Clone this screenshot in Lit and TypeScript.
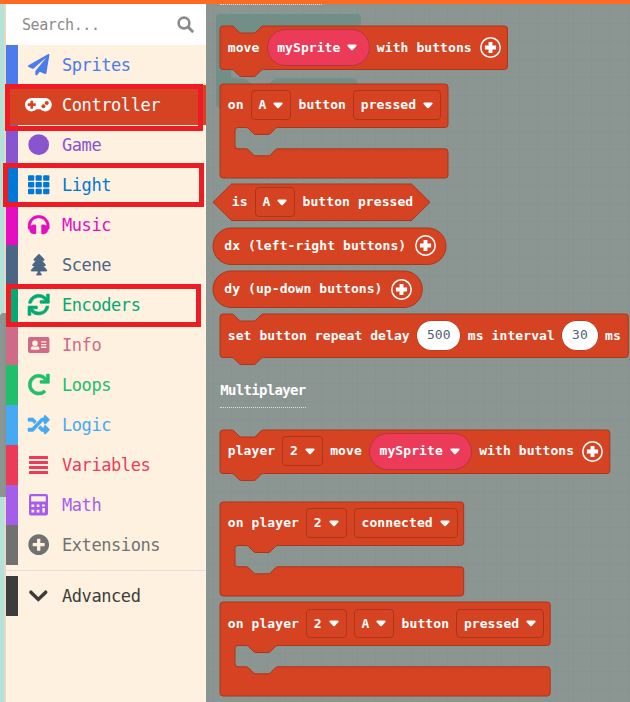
import { LitElement, html, css, svg, TemplateResult } from "lit";
import { customElement, property } from "lit/decorators.js";
import { classMap } from "lit/directives/class-map.js";
import { styleMap } from "lit/directives/style-map.js";

const p = (d: string, stroke = 0) => svg`<path d=${d} stroke="currentColor" stroke-width=${stroke} stroke-linejoin="round"></path>`;

const icons: Record<string, { box: string; w: number; h: number; body: unknown }> = {
  search: { box: "0 0 17 17", w: 17, h: 17, body: svg`<g fill="none" stroke="currentColor"><circle cx="7" cy="7" r="5.4" stroke-width="2.6"></circle><path d="M11 11l4.3 4.3" stroke-width="3" stroke-linecap="round"></path></g>` },
  plane: { box: "0 0 512 512", w: 21.4, h: 21.4, body: p("M476 3.2L12.5 270.6c-18.1 10.4-15.8 35.6 2.2 43.2L121 358.4l287.3-253.2c5.5-4.9 13.3 2.6 8.6 8.3L176 407v80.5c0 23.6 28.5 32.9 42.5 15.8L282 426l124.6 52.2c14.2 6 30.4-2.9 33-18.2l72-432C515 7.8 493.3-6.8 476 3.2z") },
  gamepad: { box: "0 0 640 512", w: 26.8, h: 21.4, body: p("M480 96H160C71.6 96 0 167.6 0 256s71.6 160 160 160c44.8 0 85.2-18.4 114.2-48h91.5c29 29.6 69.5 48 114.2 48 88.4 0 160-71.6 160-160S568.4 96 480 96zM256 276c0 6.6-5.4 12-12 12h-52v52c0 6.6-5.4 12-12 12h-40c-6.6 0-12-5.4-12-12v-52H76c-6.6 0-12-5.4-12-12v-40c0-6.6 5.4-12 12-12h52v-52c0-6.6 5.4-12 12-12h40c6.6 0 12 5.4 12 12v52h52c6.6 0 12 5.4 12 12v40zm184 68c-26.5 0-48-21.5-48-48s21.5-48 48-48 48 21.5 48 48-21.5 48-48 48zm80-80c-26.5 0-48-21.5-48-48s21.5-48 48-48 48 21.5 48 48-21.5 48-48 48z") },
  circle: { box: "0 0 512 512", w: 21.4, h: 21.4, body: svg`<circle cx="256" cy="256" r="248"></circle>` },
  grid: { box: "0 0 512 512", w: 21.4, h: 21.4, body: [0, 181.3, 362.7].map((x) => [32, 192, 352].map((y) => svg`<rect x=${x} y=${y} width="149.3" height="130" rx="24"></rect>`)) },
  headphones: { box: "0 0 512 512", w: 21.4, h: 21.4, body: p("M256 32C114.52 32 0 146.497 0 288v48a32 32 0 0 0 17.689 28.622l14.383 7.191C34.083 431.903 83.421 480 144 480h24c13.255 0 24-10.745 24-24V280c0-13.255-10.745-24-24-24h-24c-31.342 0-59.671 12.879-80 33.627V288c0-105.869 86.131-192 192-192s192 86.131 192 192v1.627C427.671 268.879 399.342 256 368 256h-24c-13.255 0-24 10.745-24 24v176c0 13.255 10.745 24 24 24h24c60.579 0 109.917-48.098 111.928-108.187l14.382-7.191A32 32 0 0 0 512 336v-48c0-141.479-114.496-256-256-256z", 8) },
  tree: { box: "0 0 384 512", w: 16, h: 21.4, body: p("M378.31 378.49L298.42 288h30.63c9.01 0 16.98-5 20.78-13.06 3.8-8.04 2.55-17.26-3.28-24.05L268.42 160h28.89c9.1 0 17.3-5.35 20.86-13.61 3.52-8.13 1.86-17.59-4.24-24.08L203.66 4.83c-6.03-6.45-17.28-6.45-23.32 0L70.06 122.31c-6.1 6.49-7.75 15.95-4.24 24.08C69.38 154.65 77.59 160 86.69 160h28.89l-78.14 90.91c-5.81 6.78-7.06 15.99-3.27 24.04C37.97 283 45.93 288 54.95 288h30.63L5.69 378.49c-6 6.79-7.36 16.09-3.56 24.26 3.75 8.05 12 13.25 21.01 13.25H160v24.45l-30.29 48.4c-5.32 10.64 2.42 23.16 14.31 23.16h95.96c11.89 0 19.63-12.52 14.31-23.16L224 440.45V416h136.86c9.01 0 17.26-5.2 21.01-13.25 3.8-8.17 2.44-17.47-3.56-24.26z", 6) },
  sync: { box: "0 0 512 512", w: 21.4, h: 21.4, body: p("M440.65 12.57l4 82.77A247.16 247.16 0 0 0 255.83 8C134.73 8 33.91 94.92 12.29 209.82A12 12 0 0 0 24.09 224h49.05a12 12 0 0 0 11.67-9.26 175.91 175.91 0 0 1 317-56.94l-101.46-4.86a12 12 0 0 0-12.57 12v47.41a12 12 0 0 0 12 12H500a12 12 0 0 0 12-12V12a12 12 0 0 0-12-12h-47.37a12 12 0 0 0-11.98 12.57zM255.83 432a175.61 175.61 0 0 1-146-77.8l101.8 4.87a12 12 0 0 0 12.57-12v-47.4a12 12 0 0 0-12-12H12a12 12 0 0 0-12 12V500a12 12 0 0 0 12 12h47.35a12 12 0 0 0 12-12.6l-4.15-82.57A247.17 247.17 0 0 0 255.83 504c121.11 0 221.93-86.92 243.55-201.82a12 12 0 0 0-11.8-14.18h-49.05a12 12 0 0 0-11.67 9.26A175.86 175.86 0 0 1 255.83 432z", 14) },
  card: { box: "0 0 21.4 16", w: 21.4, h: 16, body: svg`<path fill-rule="evenodd" d="M1.8 0h17.8a1.8 1.8 0 0 1 1.8 1.8v12.4a1.8 1.8 0 0 1-1.8 1.8H1.8A1.8 1.8 0 0 1 0 14.2V1.8A1.8 1.8 0 0 1 1.8 0zM7 3.5a2.8 2.8 0 1 0 0 5.6a2.8 2.8 0 0 0 0-5.6zM5 9.2C3.5 9.2 2.8 10.2 2.8 11.4v.7c0 .4.3.6.7.6h7.2c.4 0 .7-.2.7-.6v-.7c0-1.2-.8-2.2-2.3-2.2c-1.3.6-2.8.6-4.1 0zM13 4.2h5.4v1.3H13zM13 6.9h5.4v1.3H13zM13 9.6h5.4v1.3H13z"></path>` },
  redo: { box: "0 0 512 512", w: 21.4, h: 21.4, body: p("M500.33 0h-47.41a12 12 0 0 0-12 12.57l4 82.76A247.42 247.42 0 0 0 256 8C119.34 8 7.9 119.53 8 256.19 8.1 393.07 119.1 504 256 504a247.1 247.1 0 0 0 166.18-63.91 12 12 0 0 0 .48-17.43l-34-34a12 12 0 0 0-16.38-.55A176 176 0 1 1 402.1 157.8l-101.53-4.87a12 12 0 0 0-12.57 12v47.41a12 12 0 0 0 12 12h200.33a12 12 0 0 0 12-12V12a12 12 0 0 0-12-12z", 14) },
  random: { box: "0 0 512 512", w: 21.4, h: 21.4, body: p("M504.971 359.029c9.373 9.373 9.373 24.569 0 33.941l-80 79.984c-15.01 15.01-40.971 4.49-40.971-16.971V416h-58.785a12.004 12.004 0 0 1-8.773-3.812l-70.556-75.596 53.333-57.143L352 336h32v-39.981c0-21.438 25.943-31.998 40.971-16.971l80 79.981zM12 176h84l52.781 56.551 53.333-57.143-70.556-75.596A11.999 11.999 0 0 0 122.785 96H12c-6.627 0-12 5.373-12 12v56c0 6.627 5.373 12 12 12zm372 0v39.984c0 21.46 25.961 31.98 40.971 16.971l80-79.984c9.373-9.373 9.373-24.569 0-33.941l-80-79.981C409.943 24.021 384 34.582 384 56.019V96h-58.785a12.004 12.004 0 0 0-8.773 3.812L96 336H12c-6.627 0-12 5.373-12 12v56c0 6.627 5.373 12 12 12h110.785c3.326 0 6.503-1.381 8.773-3.812L352 176h32z", 14) },
  lines: { box: "0 0 19 20", w: 19, h: 20, body: [1, 6, 11, 16].map((y) => svg`<rect y=${y} width="19" height="3" rx=".5"></rect>`) },
  calc: { box: "0 0 19 21.4", w: 19, h: 21.4, body: svg`<path fill-rule="evenodd" d="M2 0h15a2 2 0 0 1 2 2v17.4a2 2 0 0 1-2 2H2a2 2 0 0 1-2-2V2A2 2 0 0 1 2 0zM2.2 2.3v5.2h14.6V2.3zM2.5 10.4v2.6h2.7v-2.6zM7.7 10.4v2.6h2.7v-2.6zM13.1 10.4v2h2.7v-2zM2.5 15.8v2.7h2.7v-2.7zM7.7 15.8v2.7h2.7v-2.7zM13.4 14v4.5h2.4V14z"></path>` },
  plus: { box: "0 0 512 512", w: 21.4, h: 21.4, body: p("M256 8C119 8 8 119 8 256s111 248 248 248 248-111 248-248S393 8 256 8zm144 276c0 6.6-5.4 12-12 12h-92v92c0 6.6-5.4 12-12 12h-56c-6.6 0-12-5.4-12-12v-92h-92c-6.6 0-12-5.4-12-12v-56c0-6.6 5.4-12 12-12h92v-92c0-6.6 5.4-12 12-12h56c6.6 0 12 5.4 12 12v92h92c6.6 0 12 5.4 12 12v56z") },
  chevron: { box: "0 0 18.6 12", w: 18.6, h: 12, body: svg`<path d="M1.9 2.2l7.4 7.2l7.4-7.2" fill="none" stroke="currentColor" stroke-width="3.5" stroke-linecap="round"></path>` },
};

const icon = (name: string) => {
  const i = icons[name];
  return html`<svg width=${i.w} height=${i.h} viewBox=${i.box} fill="currentColor" overflow="visible">${i.body}</svg>`;
};

const categories = [
  ["Sprites", "plane", "#4b7bec"],
  ["Controller", "gamepad", "#d54322"],
  ["Game", "circle", "#8854d0"],
  ["Light", "grid", "#0078d7"],
  ["Music", "headphones", "#e30fc0"],
  ["Scene", "tree", "#4b6584"],
  ["Encoders", "sync", "#03aa74"],
  ["Info", "card", "#cf6a87"],
  ["Loops", "redo", "#20bf6b"],
  ["Logic", "random", "#45aaf2"],
  ["Variables", "lines", "#ec3b59"],
  ["Math", "calc", "#a55eea"],
  ["Extensions", "plus", "#717171"],
];

@customElement("toolbox-row")
class ToolboxRow extends LitElement {
  @property() label = "";
  @property() icon = "circle";
  @property() color = "#000";
  @property({ type: Boolean }) selected = false;

  static styles = css`
    :host { display: block; height: 40px; flex: none; }
    .row { display: flex; align-items: center; height: 40px; }
    .bar { width: 12px; height: 40px; background: currentColor; flex: none; }
    .icon { width: 41px; display: flex; justify-content: center; flex: none; }
    .label { font: 17px/40px "DejaVu Sans Mono", monospace; letter-spacing: -0.43px; margin-left: 3px; }
    .selected .icon, .selected .label { color: #fff; }
  `;

  render() {
    return html`<div
      class=${classMap({ row: true, selected: this.selected })}
      style=${styleMap({ color: this.color, background: this.selected ? this.color : "transparent" })}
    >
      <span class="bar"></span><span class="icon">${icon(this.icon)}</span><span class="label">${this.label}</span>
    </div>`;
  }
}

@customElement("tool-box")
class ToolBox extends LitElement {
  static styles = css`
    :host { display: flex; flex-direction: column; background: #fef1df; }
    .search { display: flex; align-items: center; justify-content: space-between; height: 41px; flex: none;
      background: #fff; color: #8b8b8b; padding: 0 12.5px 0 16px; box-sizing: border-box; }
    .hint { font: 15px/40px "DejaVu Sans Mono", monospace; letter-spacing: -0.42px; }
    .rule { height: 1px; background: #dfdfe2; margin: 5px 0; flex: none; }
  `;

  render() {
    return html`
      <div class="search"><span class="hint">Search...</span>${icon("search")}</div>
      ${categories.map(([label, glyph, color]) => html`<toolbox-row .label=${label} .icon=${glyph} .color=${color} .selected=${label === "Controller"}></toolbox-row>`)}
      <div class="rule"></div>
      <toolbox-row label="Advanced" icon="chevron" color="#3c3c3c"></toolbox-row>
    `;
  }
}

type Part = { t: "text" | "menu" | "var" | "num" | "plus"; v?: string };
type Shape = "stack" | "event" | "hex" | "round";
interface Block { shape: Shape; width: number; top: number; parts: Part[] }

const text = (v: string): Part => ({ t: "text", v });
const menu = (v: string): Part => ({ t: "menu", v });
const variable = (v: string): Part => ({ t: "var", v });
const num = (v: string): Part => ({ t: "num", v });
const plus: Part = { t: "plus" };

const controllerBlocks: Block[] = [
  { shape: "stack", width: 287.5, top: 21, parts: [text("move"), variable("mySprite"), text("with buttons"), plus] },
  { shape: "event", width: 228, top: 14, parts: [text("on"), menu("A"), text("button"), menu("pressed")] },
  { shape: "hex", width: 217, top: 6.5, parts: [text("is"), menu("A"), text("button pressed")] },
  { shape: "round", width: 233, top: 7, parts: [text("dx (left-right buttons)"), plus] },
  { shape: "round", width: 209.3, top: 7, parts: [text("dy (up-down buttons)"), plus] },
  { shape: "stack", width: 408.3, top: 6.5, parts: [text("set button repeat delay"), num("500"), text("ms interval"), num("30"), text("ms")] },
];

const multiplayerBlocks: Block[] = [
  { shape: "stack", width: 389.8, top: 21.5, parts: [text("player"), menu("2"), text("move"), variable("mySprite"), text("with buttons"), plus] },
  { shape: "event", width: 243.7, top: 28.5, parts: [text("on player"), menu("2"), menu("connected")] },
  { shape: "event", width: 330.2, top: 6.7, parts: [text("on player"), menu("2"), menu("A"), text("button"), menu("pressed")] },
];

const heights: Record<Shape, number> = { stack: 43.5, event: 94, hex: 36.5, round: 36.5 };

function outline(shape: Shape, w: number): string {
  const r = 3;
  switch (shape) {
    case "stack":
      return `M0 ${r}a${r} ${r} 0 0 1 ${r}-${r}H11.5q1.5 0 2.5 1l5 5q1 1 2.5 1h12q1.5 0 2.5-1l5-5q1-1 2.5-1H${w - r}a${r} ${r} 0 0 1 ${r} ${r}V40.5a${r} ${r} 0 0 1-${r} ${r}H43.5q-1.5 0-2.5 1l-5 5q-1 1-2.5 1h-12q-1.5 0-2.5-1l-5-5q-1-1-2.5-1H${r}a${r} ${r} 0 0 1-${r}-${r}z`;
    case "event":
      return `M0 ${r}a${r} ${r} 0 0 1 ${r}-${r}H${w - r}a${r} ${r} 0 0 1 ${r} ${r}V40.5a${r} ${r} 0 0 1-${r} ${r}H58q-1.5 0-2.5 1l-5 5q-1 1-2.5 1H36q-1.5 0-2.5-1l-5-5q-1-1-2.5-1H18a3 3 0 0 0-3 3v15.3a3 3 0 0 0 3 3h8q1.5 0 2.5 1l5 5q1 1 2.5 1h12q1.5 0 2.5-1l5-5q1-1 2.5-1H${w - r}a${r} ${r} 0 0 1 ${r} ${r}V91a${r} ${r} 0 0 1-${r} ${r}H${r}a${r} ${r} 0 0 1-${r}-${r}z`;
    case "hex":
      return `M18.5 0H${w - 18.5}L${w} 18.25L${w - 18.5} 36.5H18.5L0 18.25z`;
    case "round":
      return `M18.25 0H${w - 18.25}a18.25 18.25 0 0 1 0 36.5H18.25a18.25 18.25 0 0 1 0-36.5z`;
  }
}

@customElement("code-block")
class CodeBlock extends LitElement {
  @property({ attribute: false }) block!: Block;

  static styles = css`
    :host { display: block; flex: none; }
    .block { display: grid; justify-content: start; }
    .offset { margin-left: -7px; }
    .shape, .parts { grid-area: 1 / 1; }
    .shape { overflow: visible; fill: #d54322; stroke: #aa361b; stroke-width: 1; display: block; }
    .parts { display: flex; align-items: center; gap: 7.2px; height: 43px; padding-left: 7.5px; white-space: pre;
      font: bold 13px/20px "DejaVu Sans Mono", monospace; letter-spacing: 0.085px; color: #fff; }
    .hex .parts { height: 36px; padding-left: 18.5px; }
    .round .parts { height: 36px; padding-left: 11px; gap: 7.8px; }
    .parts > * { flex: none; }
    .menu, .var { display: flex; align-items: center; gap: 7px; box-sizing: border-box; }
    .menu { height: 29.5px; padding: 0 7px 0 6.6px; border: 1px solid #aa361b; border-radius: 4px; }
    .var { height: 37px; width: 103px; padding: 0 9.5px; border: 1px solid #bd2f47; border-radius: 19px; background: #ec3b59; }
    .num { box-sizing: border-box; height: 29px; line-height: 28px; padding: 0 9.7px; margin: 0 0.3px; border-radius: 15px; background: #fff;
      color: #575e75; font-weight: normal; box-shadow: 0 0 0 0.5px #aa361b; }
    .arrow { fill: #fff; display: block; }
    .plus { fill: none; stroke: #fff; display: block; margin-left: 0.6px; }
  `;

  private part({ t, v }: Part): TemplateResult {
    const arrow = html`<svg class="arrow" width="10" height="7" viewBox="0 0 10 7"><path d="M1.3.5h7.4q1.3.3.8 1.5L5.8 5.9q-.8.7-1.6 0L.5 2Q0 .8 1.3.5z"></path></svg>`;
    if (t === "menu" || t === "var") return html`<span class=${t}><span>${v}</span>${arrow}</span>`;
    if (t === "plus")
      return html`<svg class="plus" width="21" height="21" viewBox="0 0 21 21"><circle cx="10.5" cy="10.5" r="9.7" stroke-width="1.5"></circle><path d="M10.5 4.9v11.2M4.9 10.5h11.2" stroke-width="3.9"></path></svg>`;
    return html`<span class=${t}>${v}</span>`;
  }

  render() {
    const { shape, width, parts } = this.block;
    const h = heights[shape];
    return html`<div class=${classMap({ block: true, [shape]: true, offset: shape === "hex" || shape === "round" })}>
      <svg class="shape" width=${width} height=${h}><path d=${outline(shape, width)}></path></svg>
      <div class="parts">${parts.map((x) => this.part(x))}</div>
    </div>`;
  }
}

@customElement("block-flyout")
class BlockFlyout extends LitElement {
  static styles = css`
    :host { display: block; position: relative; overflow: hidden; background-color: #8b9592;
      background-image: linear-gradient(90deg, #889290 1px, transparent 1px), linear-gradient(#889290 1px, transparent 1px);
      background-size: 18px 18px; background-position: 7px 1px; }
    .ghost { position: absolute; left: 9.5px; top: 9.5px; fill: #728f87; }
    .list { position: relative; display: flex; flex-direction: column; padding-left: 14.3px; }
    .dots { height: 1px; width: 102px; border-top: 1px dotted #dfe2e1; box-sizing: border-box; flex: none; }
    .title { font: bold 14px/20px "DejaVu Sans Mono", monospace; letter-spacing: -0.68px; color: #fff; margin-top: 22.5px; flex: none; }
    .under { width: 86px; margin-top: 7px; }
  `;

  private item(b: Block) {
    return html`<code-block .block=${b} style=${styleMap({ marginTop: `${b.top}px` })}></code-block>`;
  }

  render() {
    return html`
      <svg class="ghost" width="146" height="95"><path d="M0 4a4 4 0 0 1 4-4h137a4 4 0 0 1 4 4v39h-126q-4 0-4 4v13.5q0 4 4 4h8q2.5 0 4 1.5l6 5.5h14l6-5.5q1.5-1.5 4-1.5h76a4 4 0 0 1 4 4v20H20v5.500H4a4 4 0 0 1-4-4z"></path></svg>
      <div class="list">
        <div class="dots"></div>
        ${controllerBlocks.map((b) => this.item(b))}
        <div class="title">Multiplayer</div>
        <div class="dots under"></div>
        ${multiplayerBlocks.map((b) => this.item(b))}
      </div>
    `;
  }
}

@customElement("app-root")
class AppRoot extends LitElement {
  static styles = css`
    :host { display: grid; position: relative; width: 630px; height: 702px; overflow: hidden;
      grid-template: 4px 698px / 6px 200px 424px; background: #fef1df; }
    .top { grid-column: 1 / -1; background: #ff6a22; }
    .edge { display: grid; grid-template-rows: 309px 184px 1fr; }
    .sim { background: #b2e2d8; border-right: 2px solid #e4d8c8; }
    .sim.dim { background: #8b9592; border-color: #879391; border-top-left-radius: 3px; }
    .mark { position: absolute; box-sizing: border-box; border: 5px solid #ed1c24; }
    .first { left: 5px; top: 84px; width: 198px; height: 47px; }
    .second { left: 3px; top: 163px; width: 201px; height: 44px; }
    .third { left: 6px; top: 284px; width: 195px; height: 43px; }
  `;

  render() {
    return html`
      <div class="top"></div>
      <div class="edge"><div class="sim"></div><div class="sim dim"></div><div class="sim"></div></div>
      <tool-box></tool-box>
      <block-flyout></block-flyout>
      <div class="mark first"></div>
      <div class="mark second"></div>
      <div class="mark third"></div>
    `;
  }
}
